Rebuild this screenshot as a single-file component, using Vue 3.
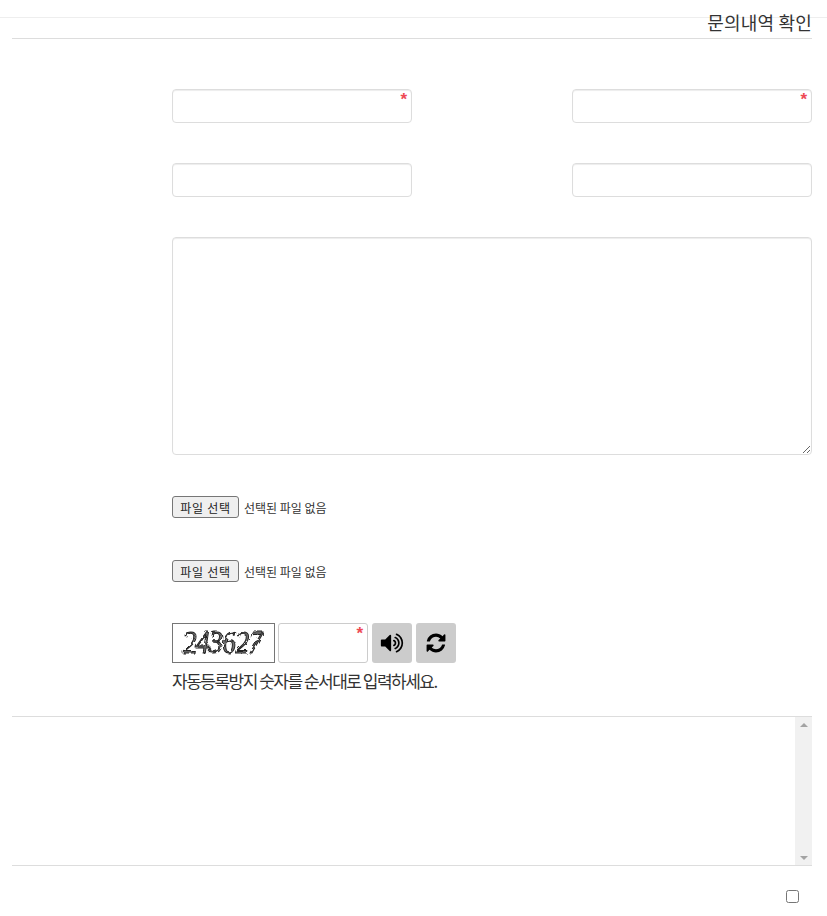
<script setup>
const captcha = '243627'
const fileLabel = '파일 선택'
const noFile = '선택된 파일 없음'
const volumePath = 'M832 352v1088q0 26-19 45t-45 19-45-19l-333-333h-262q-26 0-45-19t-19-45v-384q0-26 19-45t45-19h262l333-333q19-19 45-19t45 19 19 45zm384 544q0 76-42.5 141.5t-112.5 93.5q-10 5-25 5-26 0-45-18.5t-19-45.5q0-21 12-35.5t29-25 34-23 29-36 12-56.5-12-56.5-29-36-34-23-29-25-12-35.5q0-27 19-45.5t45-18.5q15 0 25 5 70 27 112.5 93t42.5 142zm256 0q0 153-85 282.5t-225 188.5q-13 5-25 5-27 0-46-19t-19-45q0-39 39-59 56-29 76-44 74-54 115.5-135.5t41.5-173.5-41.5-173.5-115.5-135.5q-20-15-76-44-39-20-39-59 0-26 19-45t45-19q13 0 26 5 140 59 225 188.5t85 282.5zm256 0q0 230-127 422.5t-338 283.5q-13 5-26 5-26 0-45-19t-19-45q0-36 39-59 7-4 22.5-10.5t22.5-10.5q46-25 82-51 123-91 192-227t69-289-69-289-192-227q-36-26-82-51-7-4-22.5-10.5t-22.5-10.5q-39-23-39-59 0-26 19-45t45-19q13 0 26 5 211 91 338 283.5t127 422.5z'
const refreshPath = 'M1639 1056q0 5-1 7-64 268-268 434.5t-478 166.5q-146 0-282.5-55t-243.5-157l-129 129q-19 19-45 19t-45-19-19-45v-448q0-26 19-45t45-19h448q26 0 45 19t19 45-19 45l-137 137q71 66 161 102t187 36q134 0 250-65t186-179q11-17 53-117 8-23 30-23h192q13 0 22.5 9.5t9.5 22.5zm25-800v448q0 26-19 45t-45 19h-448q-26 0-45-19t-19-45 19-45l138-138q-148-137-349-137-134 0-250 65t-186 179q-11 17-53 117-8 23-30 23h-199q-13 0-22.5-9.5t-9.5-22.5v-7q65-268 270-434.5t480-166.5q146 0 284 55.5t245 156.5l130-129q19-19 45-19t45 19 19 45z'
</script>

<template>
  <div class="page">
    <div class="top-rule"></div>
    <div class="content">
      <header class="head"><h2 class="title">문의내역 확인</h2></header>

      <form class="form" @submit.prevent>
        <div class="grid">
          <div class="field"><input class="input" type="text" /><span class="req">*</span></div>
          <div class="field"><input class="input" type="text" /><span class="req">*</span></div>
          <div class="field"><input class="input" type="text" /></div>
          <div class="field"><input class="input" type="text" /></div>
        </div>

        <textarea class="area"></textarea>

        <div class="file first"><button type="button" class="file-btn">{{ fileLabel }}</button><span class="file-name">{{ noFile }}</span></div>
        <div class="file second"><button type="button" class="file-btn">{{ fileLabel }}</button><span class="file-name">{{ noFile }}</span></div>

        <div class="captcha">
          <div class="captcha-img">
            <svg width="101" height="38" viewBox="0 0 101 38">
              <defs>
                <filter id="rough" x="-5%" y="-20%" width="110%" height="140%">
                  <feTurbulence type="fractalNoise" baseFrequency="0.2" numOctaves="2" seed="7" result="n" />
                  <feDisplacementMap in="SourceGraphic" in2="n" scale="4" />
                  <feGaussianBlur stdDeviation="0.5" />
                </filter>
              </defs>
              <g filter="url(#rough)">
                <text class="captcha-text" transform="translate(10 29) scale(1.05 1.2)">{{ captcha }}</text>
              </g>
            </svg>
          </div>
          <div class="field captcha-field"><input class="input plain" type="text" /><span class="req">*</span></div>
          <button type="button" class="icon-btn" aria-label="음성">
            <svg class="ico-vol" viewBox="0 0 1792 1792"><path :d="volumePath" /></svg>
          </button>
          <button type="button" class="icon-btn" aria-label="새로고침">
            <svg class="ico-ref" viewBox="0 0 1792 1792"><path :d="refreshPath" /></svg>
          </button>
        </div>
        <p class="hint">자동등록방지 숫자를 순서대로 입력하세요.</p>
      </form>

      <section class="terms">
        <div class="terms-body"></div>
        <div class="scrollbar">
          <span class="arrow up"></span>
          <span class="arrow down"></span>
        </div>
      </section>

      <div class="agree"><input class="check" type="checkbox" /></div>
    </div>
  </div>
</template>

<style>
html, body { margin: 0; background: #fff; }
</style>

<style scoped>
.page {
  font-family: "Noto Sans CJK KR", "Noto Sans", sans-serif;
  color: #333;
  height: 916px;
  overflow: hidden;
}
.top-rule { height: 17px; border-bottom: 1px solid #eee; }
.content { padding: 0 15px 0 12px; }
.head { height: 20px; border-bottom: 1px solid #ddd; display: flex; justify-content: flex-end; }
.title {
  margin: 0;
  font-size: 18px;
  font-weight: 400;
  line-height: 10px;
  letter-spacing: .2px;
  color: #333;
  transform: translateY(-1px);
}
.form { padding: 50px 0 0 160px; display: flex; flex-direction: column; }
.grid {
  display: grid;
  grid-template-columns: 240px 240px;
  justify-content: space-between;
  row-gap: 40px;
}
.field { position: relative; height: 34px; }
.input {
  display: block;
  width: 100%;
  height: 100%;
  box-sizing: border-box;
  border: 1px solid #ddd;
  border-radius: 4px;
  background: #fff;
  box-shadow: inset 0 1px 1px rgba(0, 0, 0, .075);
  outline: none;
  padding: 6px 12px;
}
.req {
  position: absolute;
  top: 1px;
  right: 5px;
  color: #ee4a54;
  font-family: "Liberation Sans", sans-serif;
  font-size: 17px;
  font-weight: 700;
  line-height: 20px;
}
.area {
  display: block;
  box-sizing: border-box;
  width: 640px;
  height: 218px;
  margin: 40px 0 0;
  border: 1px solid #ddd;
  border-radius: 4px;
  box-shadow: inset 0 1px 1px rgba(0, 0, 0, .075);
  outline: none;
  resize: vertical;
}
.file { display: flex; align-items: center; height: 22px; }
.file.first { margin-top: 41px; }
.file.second { margin-top: 42px; }
.file-btn {
  box-sizing: border-box;
  width: 67px;
  height: 22px;
  padding: 0;
  border: 1px solid #767676;
  border-radius: 3px;
  background: #efefef;
  color: #222;
  font: 12px "Noto Sans CJK KR", sans-serif;
  letter-spacing: .7px;
}
.file-name { margin-left: 5px; font-size: 12px; color: #333; }
.captcha { display: flex; margin-top: 41px; height: 40px; }
.captcha-img {
  box-sizing: border-box;
  width: 103px;
  height: 40px;
  border: 1px solid #767676;
  background: #fff;
  overflow: hidden;
}
.captcha-img svg { display: block; width: 101px; height: 38px; }
.captcha-text {
  font-family: "Liberation Serif", serif;
  font-size: 26px;
  font-style: italic;
  letter-spacing: -.5px;
  fill: #777;
  stroke: #222;
  stroke-width: .9px;
}
.captcha-field { width: 90px; height: 40px; margin-left: 3px; margin-right: 4px; }
.plain { box-shadow: none; border-color: #ccc; border-radius: 3px; }
.icon-btn {
  width: 40px;
  height: 40px;
  margin-right: 4px;
  padding: 0;
  border: 0;
  border-radius: 3px;
  background: #ccc;
  display: flex;
  align-items: center;
  justify-content: center;
}
.ico-vol { width: 24px; height: 24px; fill: #000; }
.ico-ref { width: 22px; height: 22px; fill: #000; }
.hint {
  margin: 6px 0 0;
  font-size: 17px;
  line-height: 24px;
  letter-spacing: -1.5px;
  color: #333;
}
.terms {
  display: flex;
  height: 148px;
  margin-top: 23px;
  border-top: 1px solid #ddd;
  border-bottom: 1px solid #ddd;
}
.terms-body { flex: 1; }
.scrollbar {
  position: relative;
  width: 17px;
  background: #f1f1f1;
}
.arrow {
  position: absolute;
  left: 5px;
  width: 0;
  height: 0;
  border-left: 4px solid transparent;
  border-right: 4px solid transparent;
}
.arrow.up { top: 6px; border-bottom: 4px solid #a3a3a3; }
.arrow.down { bottom: 5px; border-top: 4px solid #a3a3a3; }
.agree { display: flex; justify-content: flex-end; padding: 24px 13px 0 0; }
.check { display: block; width: 13px; height: 13px; margin: 0; }
</style>
